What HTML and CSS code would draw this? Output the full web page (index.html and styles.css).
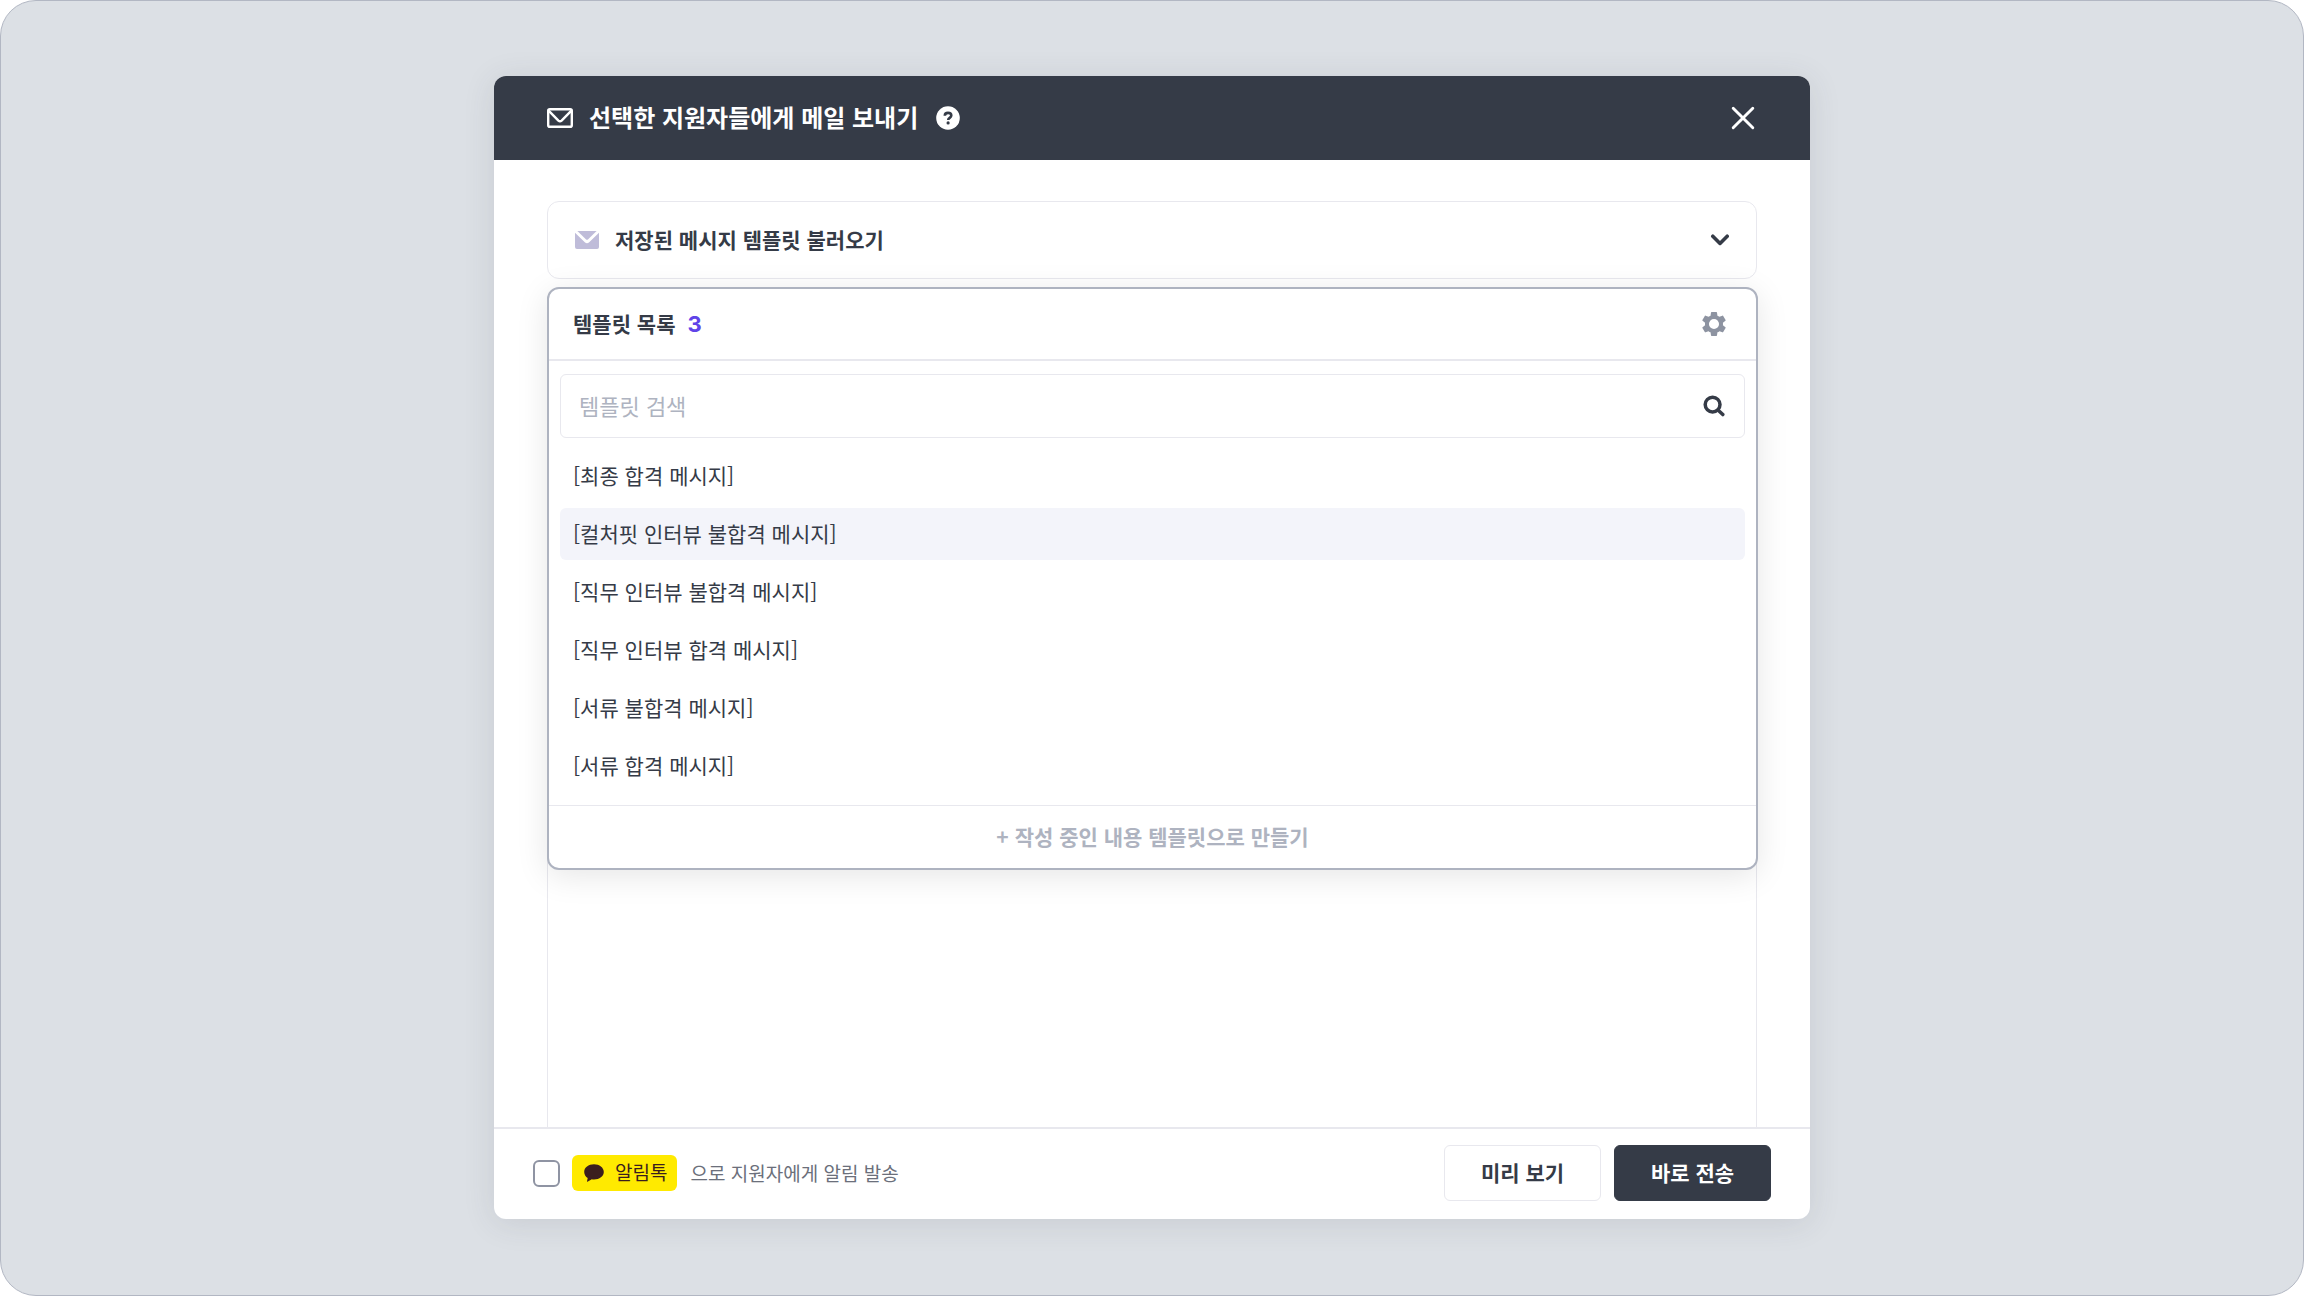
FILE: index.html
```html
<!DOCTYPE html>
<html lang="ko">
<head>
<meta charset="utf-8">
<meta name="viewport" content="width=device-width, initial-scale=1">
<title>선택한 지원자들에게 메일 보내기</title>
<link rel="stylesheet" href="styles.css">
</head>
<body>
<main class="backdrop">
  <section class="modal" role="dialog" aria-labelledby="modal-title">
    <header class="modal-header">
      <svg class="icon-mail" viewBox="0 0 28 22" fill="none" stroke="currentColor" stroke-width="2.4" stroke-linejoin="round"><rect x="2.2" y="2.2" width="23.6" height="17.6" rx="1.6"/><path d="M2.6 3.6 12.4 13.6Q14 15 15.6 13.6L25.4 3.6"/></svg>
      <h1 class="modal-title" id="modal-title">선택한 지원자들에게 메일 보내기</h1>
      <button class="icon-button help" type="button" aria-label="도움말">
        <svg width="24" height="24" viewBox="0 0 24 24"><circle cx="12" cy="12" r="11.8" fill="#fff"/><path d="M8.8 9.8C8.8 7.8 10.1 6.9 12 6.9s3.3 1 3.3 2.7c0 2.2-3.1 2.3-3.1 4.3" fill="none" stroke="#353b47" stroke-width="2.6"/><circle cx="12.1" cy="16.9" r="1.6" fill="#353b47"/></svg>
      </button>
      <button class="icon-button close" type="button" aria-label="닫기">
        <svg width="24" height="24" viewBox="0 0 24 24" fill="none" stroke="currentColor" stroke-width="2.9" stroke-linecap="round"><path d="M2.2 2.2l19.6 19.6M21.8 2.2 2.2 21.8"/></svg>
      </button>
    </header>

    <div class="modal-body">
      <div class="picker">
        <button class="picker-toggle" type="button" aria-expanded="true">
          <svg width="24" height="18" viewBox="0 0 24 18" fill="#bfbcd9"><path d="M2.4 0h19.2L12.9 8.4a1.3 1.3 0 0 1-1.8 0z"/><path d="M0 1.8 9.8 11.2a3.2 3.2 0 0 0 4.4 0L24 1.8V16a2 2 0 0 1-2 2H2a2 2 0 0 1-2-2z"/></svg>
          <span class="picker-label">저장된 메시지 템플릿 불러오기</span>
          <svg width="20" height="12" viewBox="0 0 20 12" fill="none" stroke="currentColor" stroke-width="3.6" stroke-linecap="round" stroke-linejoin="round"><path d="M2.8 2.2 10 9.4 17.200 2.2"/></svg>
        </button>

        <div class="menu">
          <div class="menu-header">
            <h2 class="menu-title">템플릿 목록</h2>
            <span class="menu-count">3</span>
            <button class="icon-button settings" type="button" aria-label="템플릿 설정">
              <svg width="24" height="24" viewBox="2 2 20 20" fill="#8d93a1"><path d="M19.43 12.98c.04-.32.07-.64.07-.98s-.03-.66-.07-.98l2.11-1.65c.19-.15.24-.42.12-.64l-2-3.46c-.12-.22-.39-.3-.61-.22l-2.49 1c-.52-.4-1.08-.73-1.69-.98l-.38-2.65C14.46 2.18 14.25 2 14 2h-4c-.25 0-.46.18-.49.42l-.38 2.65c-.61.25-1.17.59-1.69.98l-2.49-1c-.23-.09-.49 0-.61.22l-2 3.46c-.13.22-.07.49.12.64l2.11 1.65c-.04.32-.07.65-.07.98s.03.66.07.98l-2.11 1.65c-.19.15-.24.42-.12.64l2 3.46c.12.22.39.3.61.22l2.49-1c.52.4 1.08.73 1.69.98l.38 2.65c.03.24.24.42.49.42h4c.25 0 .46-.18.49-.42l.38-2.65c.61-.25 1.17-.59 1.69-.98l2.49 1c.23.09.49 0 .61-.22l2-3.46c.12-.22.07-.49-.12-.64zM12 16.2a4.2 4.2 0 1 1 0-8.4 4.2 4.2 0 0 1 0 8.4z"/></svg>
            </button>
          </div>
          <div class="menu-content">
            <div class="search">
              <input class="search-input" type="text" placeholder="템플릿 검색" aria-label="템플릿 검색">
              <button class="icon-button" type="button" aria-label="검색">
                <svg width="22" height="22" viewBox="0 0 22 22" fill="none" stroke="currentColor" stroke-width="3.5" stroke-linecap="round"><circle cx="9.6" cy="9.6" r="7.4"/><path d="M15.2 15.2l4.600 4.400"/></svg>
              </button>
            </div>
            <ul class="template-list">
              <li><button class="template" type="button">[최종 합격 메시지]</button></li>
              <li><button class="template is-active" type="button">[컬처핏 인터뷰 불합격 메시지]</button></li>
              <li><button class="template" type="button">[직무 인터뷰 불합격 메시지]</button></li>
              <li><button class="template" type="button">[직무 인터뷰 합격 메시지]</button></li>
              <li><button class="template" type="button">[서류 불합격 메시지]</button></li>
              <li><button class="template" type="button">[서류 합격 메시지]</button></li>
            </ul>
          </div>
          <button class="menu-create" type="button">+ 작성 중인 내용 템플릿으로 만들기</button>
        </div>
      </div>

      <textarea class="editor" aria-label="메일 내용"></textarea>
    </div>

    <footer class="modal-footer">
      <input class="notify-check" type="checkbox" id="notify">
      <label class="notify-label" for="notify">
        <span class="badge">
          <svg width="20" height="18" viewBox="0 0 20 18" fill="#3b1e1e"><path d="M10 .3C4.500.3.2 3.600.2 7.900c0 2.500 1.400 4.700 3.500 6.100l-.7 3.300c-.1.400.2.600.5.400l4.300-2.500c.7.100 1.400.2 2.200.2 5.400 0 9.800-3.300 9.800-7.500S15.400.3 10 .3z"/></svg>
          <span class="badge-label">알림톡</span>
        </span>
        <span class="notify-text">으로 지원자에게 알림 발송</span>
      </label>
      <div class="actions">
        <button class="button" type="button">미리 보기</button>
        <button class="button button-primary" type="button">바로 전송</button>
      </div>
    </footer>
  </section>
</main>
</body>
</html>
```
FILE: styles.css
```css
:root {
  --ink: #353b47;
  --line: #e8e8ee;
  --muted: #aeb3c0;
}

* {
  box-sizing: border-box;
}

body {
  margin: 0;
  background: #fff;
  color: var(--ink);
  font-family: "Noto Sans CJK KR", sans-serif;
  font-size: 21px;
  line-height: 32px;
}

h1,
h2,
ul {
  margin: 0;
  padding: 0;
}

button,
input,
textarea {
  margin: 0;
  color: inherit;
  font: inherit;
}

button {
  padding: 0;
  border: 0;
  background: none;
  cursor: pointer;
}

svg {
  display: block;
  flex: none;
}

.backdrop {
  display: flex;
  justify-content: center;
  min-height: 100vh;
  padding: 75px 24px 76px;
  border: 1px solid #b2b7c3;
  border-radius: 36px;
  background: #dce0e5;
}

.modal {
  display: flex;
  flex-direction: column;
  width: 100%;
  max-width: 1316px;
  overflow: hidden;
  border-radius: 12px;
  background: #fff;
  box-shadow: 0 4px 32px rgba(54, 58, 70, 0.12);
}

.modal-header {
  display: flex;
  align-items: center;
  height: 84px;
  padding: 0 55px 0 52px;
  background: var(--ink);
  color: #fff;
}

.icon-mail {
  width: 28px;
  height: 22px;
}

.modal-title {
  margin-left: 15px;
  padding-bottom: 2px;
  font-size: 24px;
  font-weight: 700;
}

.icon-button {
  display: flex;
}

.help {
  margin-left: 18px;
}

.close {
  margin-left: auto;
}

.modal-body {
  display: flex;
  flex: 1;
  flex-direction: column;
  padding: 41px 53px 0;
}

.picker {
  position: relative;
}

.picker-toggle {
  display: flex;
  align-items: center;
  width: 100%;
  height: 78px;
  padding: 0 26px 0 27px;
  border: 1px solid var(--line);
  border-radius: 12px;
}

.picker-label {
  margin: 0 auto 0 16px;
  padding-bottom: 2px;
  font-weight: 700;
}

.menu {
  position: absolute;
  top: 100%;
  right: -1px;
  left: 0;
  margin-top: 8px;
  border: 2px solid var(--muted);
  border-radius: 12px;
  background: #fff;
  box-shadow: 0 6px 32px rgba(0, 0, 0, 0.1);
}

.menu-header {
  display: flex;
  align-items: center;
  height: 72px;
  padding: 0 30px 0 24px;
  border-bottom: 2px solid var(--line);
}

.menu-title {
  padding-bottom: 2px;
  font-size: 21px;
  font-weight: 700;
}

.menu-count {
  margin-left: 12px;
  color: #6043e8;
  font-family: Inter, sans-serif;
  font-size: 22px;
  font-weight: 700;
}

.settings {
  margin-left: auto;
}

.menu-content {
  padding: 13px 11px;
}

.search {
  display: flex;
  align-items: center;
  height: 64px;
  padding: 0 19px 0 18px;
  border: 1px solid var(--line);
  border-radius: 6px;
}

.search-input {
  flex: 1;
  min-width: 0;
  padding: 0 0 2px;
  border: 0;
  outline: 0;
  background: none;
  font-size: 22px;
}

.search-input::placeholder {
  color: var(--muted);
  opacity: 1;
}

.template-list {
  display: grid;
  gap: 6px;
  margin-top: 12px;
  list-style: none;
}

.template {
  display: block;
  width: 100%;
  height: 52px;
  padding: 0 13px 2px;
  border-radius: 6px;
  text-align: left;
}

.template.is-active {
  background: #f3f4fa;
}

.menu-create {
  display: block;
  width: 100%;
  height: 63px;
  padding-bottom: 2px;
  border-top: 1px solid var(--line);
  color: var(--muted);
  font-weight: 700;
}

.editor {
  flex: 1;
  width: 100%;
  min-height: 460px;
  margin-top: 388px;
  padding: 24px;
  border: 1px solid var(--line);
  border-bottom: 0;
  outline: 0;
  resize: none;
}

.modal-footer {
  display: flex;
  align-items: center;
  height: 92px;
  padding: 0 39px 2px;
  border-top: 2px solid var(--line);
}

.notify-check {
  width: 27px;
  height: 27px;
  border: 2px solid #8f94a3;
  border-radius: 6px;
  background: #fff;
  appearance: none;
}

.notify-check:checked {
  background: var(--ink);
}

.notify-label {
  display: flex;
  align-items: center;
  margin-left: 12px;
}

.badge {
  display: flex;
  align-items: center;
  gap: 11px;
  height: 36px;
  padding: 0 10px 0 12px;
  border-radius: 6px;
  background: #ffea00;
  color: #3b1e1e;
  font-size: 19px;
}

.badge-label {
  padding-bottom: 2px;
}

.notify-text {
  margin-left: 13px;
  color: #6b6f7b;
  font-size: 19px;
}

.actions {
  display: flex;
  gap: 13px;
  margin-left: auto;
}

.button {
  width: 157px;
  height: 56px;
  padding-bottom: 2px;
  border: 1px solid var(--line);
  border-radius: 6px;
  background: #fff;
  font-weight: 700;
}

.button-primary {
  border-color: var(--ink);
  background: var(--ink);
  color: #fff;
}
```
